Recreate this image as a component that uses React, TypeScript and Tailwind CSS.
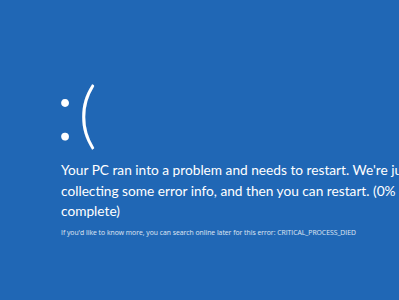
export default function App() {
  return (
    <div className="h-[300px] w-[399px] overflow-hidden bg-[#2067b5] text-white font-['Lato',sans-serif]">
      <div className="pl-[61px] pt-[66px]">
        <div className="-ml-[6px] flex h-[94px] items-baseline font-light leading-none">
          <span className="text-[84px]">:</span>
          <span className="ml-[3px] text-[72px]">(</span>
        </div>
        <p className="whitespace-nowrap text-[13.7px] leading-[20.5px]">
          Your PC ran into a problem and needs to restart. We're just
          <br />
          collecting some error info, and then you can restart. (0%
          <br />
          complete)
        </p>
        <p className="mt-[6px] whitespace-nowrap text-[6.8px] leading-[10px] text-white/85 font-['Open_Sans',sans-serif]">
          If you'd like to know more, you can search online later for this error: CRITICAL_PROCESS_DIED
        </p>
      </div>
    </div>
  );
}
